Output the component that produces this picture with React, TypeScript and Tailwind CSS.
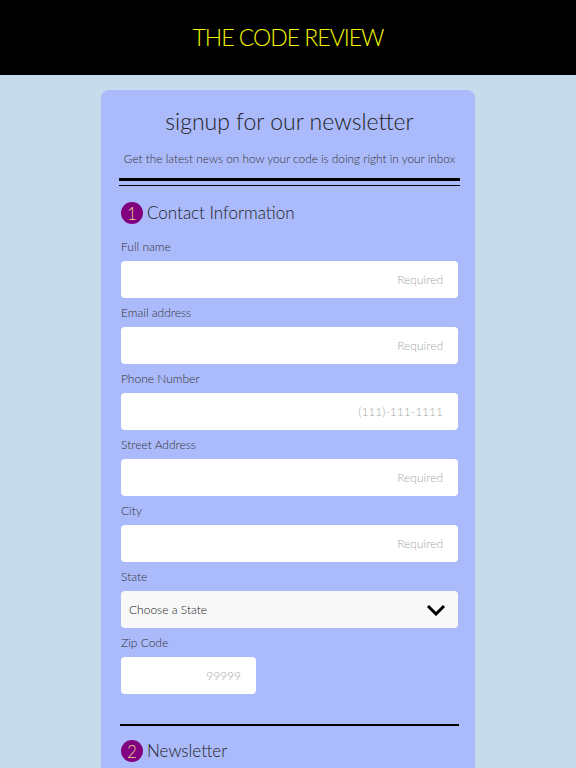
import { useState } from 'react'

const font = { fontFamily: 'Lato, "Noto Sans", sans-serif' }

interface FieldProps {
  label: string
  placeholder: string
  type?: string
  narrow?: boolean
}

function Field({ label, placeholder, type = 'text', narrow }: FieldProps) {
  return (
    <div className="flex flex-col">
      <label className="text-[12px] leading-[14px] text-[#333] font-light">{label}</label>
      <input
        type={type}
        placeholder={placeholder}
        className={`mt-[7px] h-[37px] rounded-[4px] bg-white pr-[15px] text-right text-[12px] font-light text-[#333] placeholder:text-[#a8a8a8] outline-none ${
          narrow ? 'w-[135px]' : 'w-full'
        }`}
      />
    </div>
  )
}

function StepHeading({ n, title }: { n: number; title: string }) {
  return (
    <div className="flex items-center gap-[4px]">
      <span className="flex h-[22px] w-[22px] items-center justify-center rounded-full bg-[#800080] text-[17px] leading-none font-light text-[#f2d58c]">
        {n}
      </span>
      <span className="text-[17px] leading-[22px] font-light text-[#222]">{title}</span>
    </div>
  )
}

export default function App() {
  const [state, setState] = useState('')

  return (
    <div className="min-h-[768px] bg-[#c6dbec]" style={font}>
      {/* Header */}
      <header className="flex h-[75px] items-center justify-center bg-black">
        <h1 className="text-[23px] font-light tracking-[-1px] text-[#f6f600]">THE CODE REVIEW</h1>
      </header>

      <main className="flex justify-center pt-[15px]">
        <form className="w-[374px] rounded-t-[8px] bg-[#abbafb] pl-[20px] pr-[17px] pt-[15px] pb-[20px]">
          <h2 className="text-center text-[23px] leading-[32px] font-light text-[#222]">
            signup for our newsletter
          </h2>
          <p className="mt-[15px] whitespace-nowrap text-center text-[11.8px] leading-[14px] font-light text-[#333]">
            Get the latest news on how your code is doing right in your inbox
          </p>
          <div className="-mx-[2px] mt-[12px] border-t-[3px] border-black" />
          <div className="-mx-[2px] mt-[4px] border-t border-black" />

          <div className="mt-[16px]">
            <StepHeading n={1} title="Contact Information" />
          </div>

          <div className="mt-[16px] flex flex-col gap-[8px]">
            <Field label="Full name" placeholder="Required" />
            <Field label="Email address" placeholder="Required" type="email" />
            <Field label="Phone Number" placeholder="(111)-111-1111" type="tel" />
            <Field label="Street Address" placeholder="Required" />
            <Field label="City" placeholder="Required" />

            <div className="flex flex-col">
              <label className="text-[12px] leading-[14px] font-light text-[#333]">State</label>
              <div className="relative mt-[7px]">
                <select
                  value={state}
                  onChange={(e) => setState(e.target.value)}
                  className="h-[37px] w-full appearance-none rounded-[4px] bg-[#f8f8f8] pl-[8px] text-[12px] font-light text-[#222] outline-none"
                >
                  <option value="">Choose a State</option>
                  <option value="CA">California</option>
                  <option value="NY">New York</option>
                  <option value="TX">Texas</option>
                </select>
                <svg
                  className="pointer-events-none absolute right-[12px] top-1/2 -translate-y-1/2"
                  width="20"
                  height="12"
                  viewBox="0 0 20 12"
                  fill="none"
                >
                  <polyline points="2,2 10,10 18,2" stroke="black" strokeWidth="3" />
                </svg>
              </div>
            </div>

            <Field label="Zip Code" placeholder="99999" narrow />
          </div>

          <div className="-mx-[1px] mt-[30px] border-t-2 border-black" />

          <div className="mt-[14px]">
            <StepHeading n={2} title="Newsletter" />
          </div>
        </form>
      </main>
    </div>
  )
}
